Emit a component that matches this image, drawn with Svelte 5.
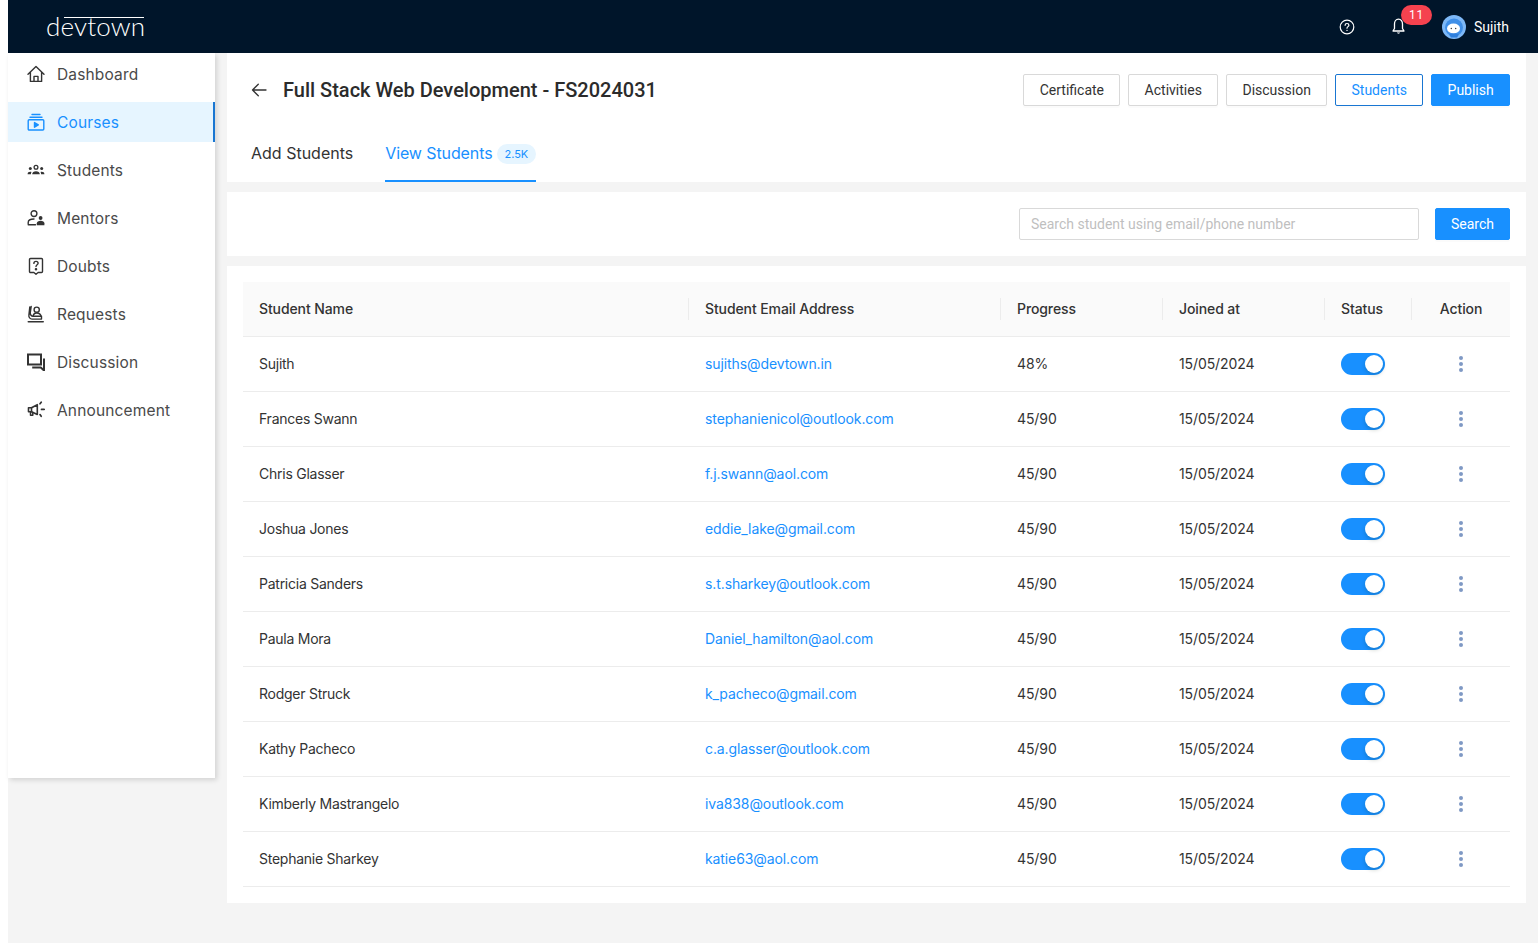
<script>
  const nav = [
    { label: 'Dashboard', icon: 'home' },
    { label: 'Courses', icon: 'courses', active: true },
    { label: 'Students', icon: 'students' },
    { label: 'Mentors', icon: 'mentors' },
    { label: 'Doubts', icon: 'doubts' },
    { label: 'Requests', icon: 'requests' },
    { label: 'Discussion', icon: 'discussion' },
    { label: 'Announcement', icon: 'announce' }
  ];
  const rows = [
    ['Sujith', 'sujiths@devtown.in', '48%'],
    ['Frances Swann', 'stephanienicol@outlook.com', '45/90'],
    ['Chris Glasser', 'f.j.swann@aol.com', '45/90'],
    ['Joshua Jones', 'eddie_lake@gmail.com', '45/90'],
    ['Patricia Sanders', 's.t.sharkey@outlook.com', '45/90'],
    ['Paula Mora', 'Daniel_hamilton@aol.com', '45/90'],
    ['Rodger Struck', 'k_pacheco@gmail.com', '45/90'],
    ['Kathy Pacheco', 'c.a.glasser@outlook.com', '45/90'],
    ['Kimberly Mastrangelo', 'iva838@outlook.com', '45/90'],
    ['Stephanie Sharkey', 'katie63@aol.com', '45/90']
  ];
</script>

<div class="page">
  <header class="topbar">
    <div class="logo"><span class="logo-text">devtown</span><i class="logo-bar"></i></div>
    <div class="top-right">
      <svg class="help" viewBox="0 0 16 16" width="16" height="16" fill="none" stroke="#fff" stroke-width="1.2">
        <circle cx="8" cy="8" r="6.8" />
        <path d="M6.1 6.3c0-1.1.9-1.8 1.9-1.8s1.9.7 1.9 1.7c0 1.4-1.9 1.5-1.9 3" stroke-linecap="round" />
        <circle cx="8" cy="11.4" r=".7" fill="#fff" stroke="none" />
      </svg>
      <div class="bell">
        <svg viewBox="0 0 13 17" width="13" height="17" fill="none" stroke="#fff" stroke-width="1.3">
          <path d="M6.5 1.2C3.900 1.200 2.500 3.200 2.500 6v4.500L1 13h11l-1.500-2.500V6c0-2.800-1.400-4.800-4-4.800z" stroke-linejoin="round" />
          <path d="M5 14.600h3c0 1.500-3 1.500-3 0z" fill="#fff" stroke="none" />
        </svg>
        <span class="badge">11</span>
      </div>
      <svg class="avatar" viewBox="0 0 24 24" width="24" height="24">
        <circle cx="12" cy="12" r="12" fill="#7db8f7" />
        <circle cx="12" cy="12.500" r="9" fill="#3f8fe8" />
        <ellipse cx="11.500" cy="13.500" rx="6.500" ry="5" fill="#fff" />
        <path d="M7 19.500c1.500-1.500 8-1.500 10 0l-2 3h-6z" fill="#2f7fdc" />
        <circle cx="9.300" cy="13.500" r=".7" fill="#333" />
        <circle cx="13.700" cy="13.500" r=".7" fill="#333" />
      </svg>
      <span class="user">Sujith</span>
    </div>
  </header>

  <div class="body">
    <aside class="sidebar">
      {#each nav as item}
        <div class="nav-item" class:active={item.active}>
          <span class="nav-icon">
            <svg viewBox="0 0 18 18" width="18" height="18" fill="none" stroke="currentColor" stroke-width="1.4" stroke-linejoin="round" stroke-linecap="round">
              {#if item.icon === 'home'}
                <path d="M1 9.200L9 1.600l8 7.600M3.400 7.200V16.400h11.200V7.200M7 16.400v-5h4v5" />
              {:else if item.icon === 'courses'}
                <path d="M5 1.500h8M3 4.200h12" />
                <rect x="1.200" y="6.800" width="15.600" height="10.200" rx="1" />
                <path d="M7.500 9.600v4.600l3.800-2.300z" fill="currentColor" />
              {:else if item.icon === 'students'}
                <circle cx="9" cy="6.200" r="1.900" stroke-width="1.300" />
                <circle cx="3.300" cy="7.600" r="1.500" fill="currentColor" stroke="none" />
                <circle cx="14.700" cy="7.600" r="1.500" fill="currentColor" stroke="none" />
                <path d="M5.200 13.200c0-2.100 1.600-3 3.800-3s3.800.9 3.800 3z" fill="currentColor" stroke="none" />
                <path d="M.6 13.200c0-1.800 1-2.500 2.700-2.500.5 0 .9.100 1.200.2-.4.500-.6 1.300-.6 2.300zM17.400 13.200c0-1.800-1-2.500-2.700-2.500-.5 0-.9.100-1.200.2.400.5.600 1.300.6 2.300z" fill="currentColor" stroke="none" />
              {:else if item.icon === 'mentors'}
                <circle cx="7" cy="4.600" r="2.900" />
                <path d="M1.200 14.800v-1.400c0-2 2.500-3.400 5.800-3.400M1.200 15.800h7.300" />
                <circle cx="13.600" cy="9" r="1.900" fill="currentColor" stroke="none" />
                <path d="M9.800 16.200v-1.900c0-1.600 1.700-2.500 3.800-2.500s3.800.9 3.800 2.500v1.900z" fill="currentColor" stroke="none" />
              {:else if item.icon === 'doubts'}
                <path d="M3.500 1.500h11a1 1 0 011 1v12a1 1 0 01-1 1h-3.400L9 17.200l-2.100-1.700H3.500a1 1 0 01-1-1v-12a1 1 0 011-1z" />
                <path d="M6.900 6.400c0-1.300 1-2 2.100-2s2.100.7 2.100 1.800c0 1.500-2.100 1.600-2.100 3.300" />
                <circle cx="9" cy="12.200" r=".6" fill="currentColor" />
              {:else if item.icon === 'requests'}
                <circle cx="9.700" cy="4.700" r="2.600" />
                <path d="M4.200 1.500L3.300 7.500c-.2 2.200 1 3.800 2.800 3.800h8.400v2.800H5c-2 0-3.400-1.800-3.100-4L2.800 2" />
                <path d="M6.300 11.300c0-2.100 1.500-3.300 3.400-3.300s3.900.9 4.400 3.300" />
                <path d="M1.300 16.800h14.900" stroke-width="1.600" />
              {:else if item.icon === 'discussion'}
                <path d="M1 1.500h13v10H1zM17 5.400v12.100l-3.200-3H5.200" stroke-width="2" stroke-linejoin="miter" stroke-linecap="butt" />
              {:else if item.icon === 'announce'}
                <path d="M1.500 6.800h3l5.800-3.100v9.800L4.500 10.700h-3z" stroke-width="1.600" />
                <path d="M4.500 6.800v3.900" stroke-width="1.600" />
                <path d="M3.500 10.900v3.300h2.300v-2.600" stroke-width="1.500" />
                <path d="M13 2.800l1.200-1.600M13 13.600l1.200 1.700M14.500 8.400h2.700" stroke-width="1.700" />
              {/if}
            </svg>
          </span>
          <span>{item.label}</span>
        </div>
      {/each}
    </aside>

    <main class="content">
      <section class="panel head-panel">
        <div class="title-row">
          <div class="title">
            <svg viewBox="0 0 16 16" width="16" height="16" fill="none" stroke="#333" stroke-width="1.300" stroke-linecap="round" stroke-linejoin="round">
              <path d="M15 8H1.500M7.300 2.200L1.500 8l5.800 5.800" />
            </svg>
            <h1>Full Stack Web Development - FS2024031</h1>
          </div>
          <div class="actions">
            <button class="btn">Certificate</button>
            <button class="btn">Activities</button>
            <button class="btn">Discussion</button>
            <button class="btn outline">Students</button>
            <button class="btn primary">Publish</button>
          </div>
        </div>
        <div class="tabs">
          <div class="tab">Add Students</div>
          <div class="tab current">View Students <span class="count">2.5K</span></div>
        </div>
      </section>

      <section class="panel search-panel">
        <input class="search" placeholder="Search student using email/phone number" />
        <button class="btn primary search-btn">Search</button>
      </section>

      <section class="panel table-panel">
        <table>
          <colgroup>
            <col class="c1" /><col class="c2" /><col class="c3" /><col class="c3" /><col class="c5" /><col class="c6" />
          </colgroup>
          <thead>
            <tr>
              <th>Student Name</th>
              <th>Student Email Address</th>
              <th>Progress</th>
              <th>Joined at</th>
              <th>Status</th>
              <th class="center">Action</th>
            </tr>
          </thead>
          <tbody>
            {#each rows as r}
              <tr>
                <td class="txt name">{r[0]}</td>
                <td class="txt email">{r[1]}</td>
                <td class="txt">{r[2]}</td>
                <td class="txt">15/05/2024</td>
                <td><span class="switch"><i></i></span></td>
                <td class="center"><span class="more"><i></i><i></i><i></i></span></td>
              </tr>
            {/each}
          </tbody>
        </table>
      </section>
    </main>
  </div>
</div>

<style>
  :global(body) { margin: 0; background: #fff; }
  .page { margin-left: 8px; min-height: 943px; background: #f4f4f4; font-family: Inter, "Open Sans", sans-serif; color: #333; display: flex; flex-direction: column; }
  .topbar { height: 53px; background: #00152a; display: flex; align-items: center; justify-content: space-between; padding: 0 29px 0 38px; flex: none; }
  .logo { position: relative; width: 100px; margin-top: -2px; }
  .logo-text { font-family: Lato, sans-serif; font-weight: 300; font-size: 26px; letter-spacing: .15px; color: #fff; line-height: 30px; display: block; }
  .logo-bar { position: absolute; left: 18px; right: 2px; top: 6px; height: 1px; background: #fff; }
  .top-right { display: flex; align-items: center; }
  .help { margin-right: 37px; }
  .bell { position: relative; width: 13px; height: 17px; margin-right: 37px; }
  .bell svg { display: block; }
  .badge { position: absolute; left: 9px; top: -13px; width: 31px; height: 20px; border-radius: 10px; background: #f5424f; color: #fff; font: 12px/20px Roboto, sans-serif; letter-spacing: .6px; text-align: center; }
  .avatar { margin-right: 8px; }
  .user { color: #fff; font: 14px Roboto, sans-serif; }

  .body { display: flex; align-items: flex-start; gap: 12px; padding-right: 12px; }
  .sidebar { width: 207px; height: 725px; flex: none; background: #fff; box-shadow: 2px 2px 5px rgba(0,0,0,.14); padding-top: 1px; box-sizing: border-box; }
  .nav-item { height: 40px; margin-bottom: 8px; display: flex; align-items: center; padding-left: 19px; gap: 12px; font-size: 15.5px; letter-spacing: .15px; color: #4a4a4a; box-sizing: border-box; }
  .nav-item.active { background: #e6f5ff; color: #1890ff; border-right: 2px solid #1976d2; }
  .nav-icon { width: 18px; height: 18px; display: flex; color: #333; }
  .active .nav-icon { color: #1890ff; }

  .content { flex: 1; min-width: 0; display: flex; flex-direction: column; gap: 10px; }
  .panel { background: #fff; }
  .head-panel { height: 129px; box-sizing: border-box; padding: 21px 16px 0 24px; display: flex; flex-direction: column; }
  .title-row { display: flex; justify-content: space-between; align-items: center; height: 32px; }
  .title { display: flex; align-items: center; gap: 16px; }
  h1 { margin: 0; font: 500 20px Roboto, sans-serif; color: #2b2b2b; }
  .actions { display: flex; gap: 8px; }
  .btn { height: 32px; padding: 0 15.3px; border: 1px solid #d9d9d9; border-radius: 2px; background: #fff; color: #333; font: 14px Roboto, sans-serif; box-shadow: 0 2px 0 rgba(0,0,0,.015); box-sizing: border-box; }
  .btn.outline { border-color: #1976d2; color: #1890ff; }
  .btn.primary { background: #1890ff; border-color: #1890ff; color: #fff; }
  .btn.search-btn { padding: 0 15px; }
  .tabs { display: flex; gap: 32px; margin-top: 32px; }
  .tab { height: 42px; font-size: 16px; color: #333; line-height: 30px; }
  .tab.current { color: #1890ff; border-bottom: 2px solid #1890ff; letter-spacing: -.1px; }
  .count { display: inline-block; height: 20px; line-height: 20px; padding: 0 7.5px; border-radius: 10px; background: #e6f5ff; font-size: 11px; letter-spacing: 0; vertical-align: 1px; }

  .search-panel { height: 64px; display: flex; align-items: center; justify-content: flex-end; gap: 16px; padding-right: 16px; }
  .search { width: 400px; height: 32px; box-sizing: border-box; border: 1px solid #d9d9d9; border-radius: 2px; padding: 0 11px; font: 14px Roboto, sans-serif; outline: none; }
  .search::placeholder { color: #bfbfbf; opacity: 1; }

  .table-panel { height: 637px; box-sizing: border-box; padding: 16px; }
  table { width: 1267px; table-layout: fixed; border-collapse: separate; border-spacing: 0; font-size: 14px; letter-spacing: -.1px; }
  .c1 { width: 446px; }
  .c2 { width: 312px; }
  .c3 { width: 162px; }
  .c5 { width: 87px; }
  .c6 { width: 98px; }
  th { position: relative; height: 55px; background: #fafafa; font-weight: 500; text-align: left; padding: 0 16px 2px; border-bottom: 1px solid #ececec; color: #333; box-sizing: border-box; }
  th + th::before { content: ""; position: absolute; left: -1px; top: 16px; height: 22px; width: 1px; background: #ececec; }
  td { height: 55px; padding: 0 16px; border-bottom: 1px solid #ececec; color: #333; box-sizing: border-box; }
  td.txt { padding-bottom: 2px; }
  .center { text-align: center; }
  .name { letter-spacing: -.25px; }
  .email { color: #1890ff; }
  .switch { display: block; width: 44px; height: 22px; border-radius: 11px; background: #1890ff; position: relative; }
  .switch i { position: absolute; right: 2px; top: 2px; width: 18px; height: 18px; border-radius: 50%; background: #fff; box-shadow: 0 2px 4px rgba(0,35,11,.2); }
  .more { display: flex; flex-direction: column; gap: 2px; width: 4px; margin: 0 auto; }
  .more i { width: 4px; height: 4px; border-radius: 50%; background: #7f99c4; }
</style>
